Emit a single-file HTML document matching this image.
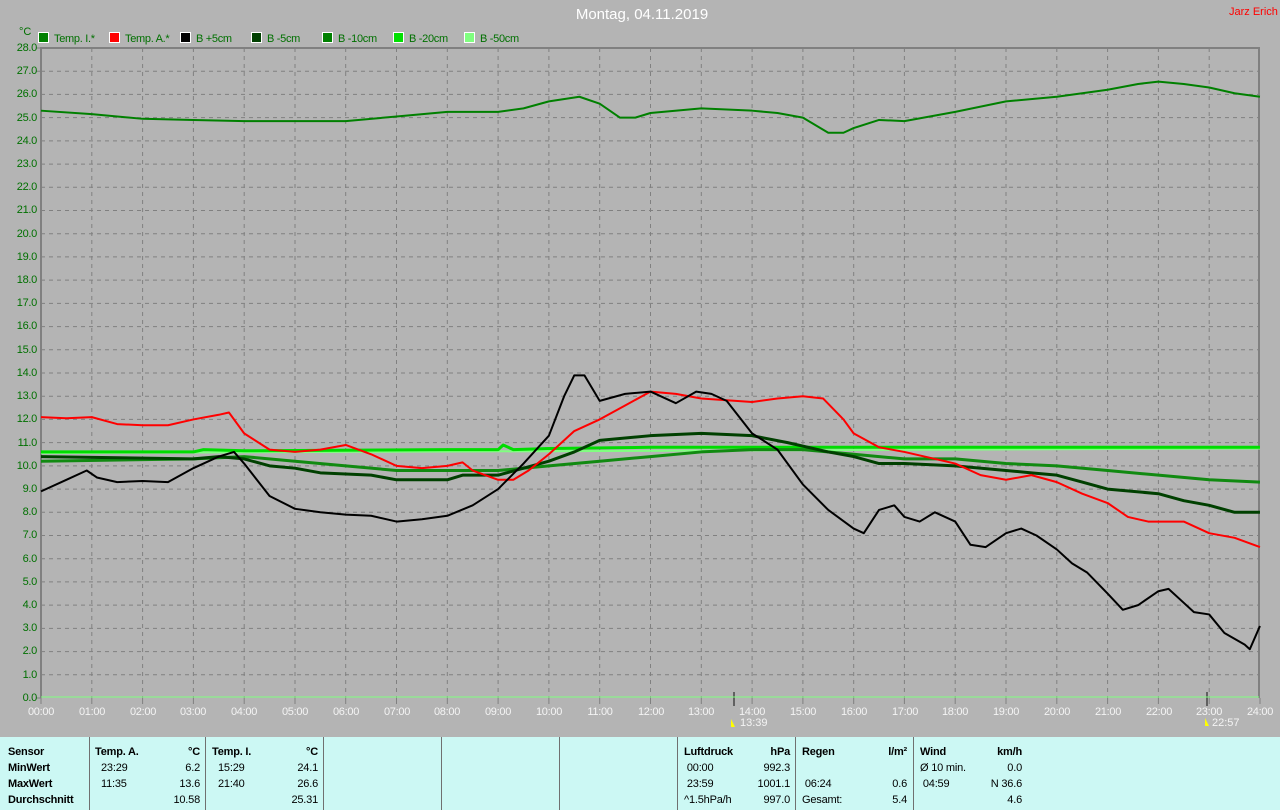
<!DOCTYPE html>
<html><head><meta charset="utf-8"><style>
body{margin:0;width:1280px;height:810px;background:#b4b4b4;position:relative;overflow:hidden;font-family:"Liberation Sans",sans-serif}
.a{position:absolute;white-space:nowrap}
.yl{position:absolute;right:1243px;font-size:11px;color:#007000;line-height:12px;letter-spacing:-0.3px}
.xl{position:absolute;font-size:11px;color:#f4f4f4;width:40px;text-align:center;top:706px;letter-spacing:-0.3px}
.lg{position:absolute;top:32px;font-size:11px;color:#007000;letter-spacing:-0.3px}
.lg i{display:inline-block;width:9px;height:9px;border:1px solid #fff;vertical-align:-1px;margin-right:5px}
#bot{position:absolute;left:0;top:737px;width:1280px;height:73px;background:#ccf8f4}
.sep{position:absolute;top:0;width:1px;height:73px;background:#707070}
.t{position:absolute;font-size:11px;color:#000;line-height:16px;letter-spacing:-0.2px}
.b{font-weight:bold}
</style></head><body>
<div class="a" style="left:0;width:1284px;text-align:center;top:6px;font-size:15px;color:#fff">Montag, 04.11.2019</div>
<div class="a" style="left:1229px;top:6px;font-size:11px;color:#f00">Jarz Erich</div>
<div class="a" style="left:19px;top:26px;font-size:11px;color:#007000">°C</div>
<div class="lg" style="left:38px"><i style="background:#008000"></i>Temp. I.*</div>
<div class="lg" style="left:109px"><i style="background:#f00"></i>Temp. A.*</div>
<div class="lg" style="left:180px"><i style="background:#000"></i>B +5cm</div>
<div class="lg" style="left:251px"><i style="background:#004000"></i>B -5cm</div>
<div class="lg" style="left:322px"><i style="background:#008000"></i>B -10cm</div>
<div class="lg" style="left:393px"><i style="background:#00e000"></i>B -20cm</div>
<div class="lg" style="left:464px"><i style="background:#80ff80"></i>B -50cm</div>

<svg class="a" style="left:0;top:0" width="1280" height="810">
<g stroke="#808080" stroke-width="1" stroke-dasharray="4,4" fill="none">
<path d="M41 71.2H1260M41 94.4H1260M41 117.6H1260M41 140.9H1260M41 164.1H1260M41 187.3H1260M41 210.5H1260M41 233.7H1260M41 256.9H1260M41 280.1H1260M41 303.4H1260M41 326.6H1260M41 349.8H1260M41 373H1260M41 396.2H1260M41 419.4H1260M41 442.6H1260M41 465.9H1260M41 489.1H1260M41 512.3H1260M41 535.5H1260M41 558.7H1260M41 581.9H1260M41 605.1H1260M41 628.4H1260M41 651.6H1260M41 674.8H1260"/>
<path d="M91.8 48V698M142.6 48V698M193.4 48V698M244.2 48V698M295 48V698M345.7 48V698M396.5 48V698M447.3 48V698M498.1 48V698M548.9 48V698M599.7 48V698M650.5 48V698M701.3 48V698M752.1 48V698M802.9 48V698M853.7 48V698M904.4 48V698M955.2 48V698M1006 48V698M1056.8 48V698M1107.6 48V698M1158.4 48V698M1209.2 48V698"/>
</g>
<path d="M41 698V48H1259V698" stroke="#808080" stroke-width="2" fill="none"/>
<path d="M36 48H41M36 71.2H41M36 698H41" stroke="#808080"/>
<g stroke="#808080"><path d="M41 698v6M91.8 698v6M142.6 698v6M193.4 698v6M244.2 698v6M295 698v6M345.7 698v6M396.5 698v6M447.3 698v6M498.1 698v6M548.9 698v6M599.7 698v6M650.5 698v6M701.3 698v6M752.1 698v6M802.9 698v6M853.7 698v6M904.4 698v6M955.2 698v6M1006 698v6M1056.8 698v6M1107.6 698v6M1158.4 698v6M1209.2 698v6M1260 698v6"/></g>
<path d="M734 692v14M1207 692v14" stroke="#606060" stroke-width="2"/>
<path d="M41 697H1259" stroke="#80ff80" stroke-width="1"/>
<g transform="translate(41,698) scale(50.79,-23.214)" fill="none" stroke-linejoin="round">
<polyline vector-effect="non-scaling-stroke" stroke="#80ff80" stroke-width="2" points="0,10.55 24,10.75"/>
<polyline vector-effect="non-scaling-stroke" stroke="#00dd00" stroke-width="3" points="0,10.6 3,10.6 3.2,10.7 4,10.65 8,10.7 9,10.7 9.1,10.9 9.3,10.7 10,10.75 12,10.8 24,10.8"/>
<polyline vector-effect="non-scaling-stroke" stroke="#118a11" stroke-width="3" points="0,10.2 3,10.3 4,10.4 5,10.2 6,10 7,9.8 8,9.8 9,9.8 10,10 11,10.2 12,10.4 13,10.6 14,10.7 15,10.7 16,10.5 17,10.3 18,10.3 19,10.1 20,10 21,9.8 22,9.6 23,9.4 24,9.3"/>
<polyline vector-effect="non-scaling-stroke" stroke="#004000" stroke-width="3" points="0,10.4 3,10.3 3.5,10.4 4,10.3 4.5,10 5,9.9 5.5,9.7 6.5,9.6 7,9.4 8,9.4 8.3,9.6 9,9.6 9.5,9.9 10,10.2 10.5,10.6 11,11.1 12,11.3 13,11.4 14,11.3 14.7,11 15.5,10.6 16,10.4 16.5,10.1 17,10.1 18,10 19,9.8 19.5,9.7 20,9.6 20.5,9.3 21,9 22,8.8 22.5,8.5 23,8.3 23.5,8 24,8"/>
<polyline vector-effect="non-scaling-stroke" stroke="#f00" stroke-width="2" points="0,12.1 0.5,12.05 1,12.1 1.5,11.8 2,11.75 2.5,11.75 3,12 3.5,12.2 3.7,12.3 4,11.4 4.5,10.7 5,10.6 5.5,10.7 6,10.9 6.5,10.5 7,10 7.5,9.9 8,10 8.3,10.15 8.5,9.8 9,9.4 9.3,9.4 9.6,9.8 10,10.5 10.5,11.5 11,12 11.5,12.6 12,13.2 12.5,13.1 13,12.9 14,12.75 14.5,12.9 15,13 15.4,12.9 15.8,12 16,11.4 16.5,10.8 17,10.6 18,10.1 18.5,9.6 19,9.4 19.5,9.6 20,9.3 20.5,8.8 21,8.4 21.4,7.8 21.8,7.6 22.5,7.6 23,7.1 23.5,6.9 24,6.5"/>
<polyline vector-effect="non-scaling-stroke" stroke="#000" stroke-width="2" points="0,8.9 0.5,9.4 0.9,9.8 1.1,9.5 1.5,9.3 2,9.35 2.5,9.3 3,9.9 3.5,10.4 3.8,10.6 4,10.1 4.5,8.7 5,8.15 5.5,8 6,7.9 6.5,7.85 7,7.6 7.5,7.7 8,7.85 8.5,8.3 9,9 9.5,10.1 10,11.3 10.3,13 10.5,13.9 10.7,13.9 11,12.8 11.5,13.1 12,13.2 12.5,12.7 12.9,13.2 13.2,13.1 13.5,12.8 14,11.4 14.5,10.7 15,9.2 15.5,8.1 16,7.3 16.2,7.1 16.5,8.1 16.8,8.3 17,7.8 17.3,7.6 17.6,8 18,7.6 18.3,6.6 18.6,6.5 19,7.1 19.3,7.3 19.6,7 20,6.4 20.3,5.8 20.6,5.4 21,4.5 21.3,3.8 21.6,4 22,4.6 22.2,4.7 22.5,4.1 22.7,3.7 23,3.6 23.3,2.8 23.7,2.3 23.8,2.1 24,3.1"/>
<polyline vector-effect="non-scaling-stroke" stroke="#008000" stroke-width="2" points="0,25.3 1,25.15 2,24.95 3,24.9 4,24.85 5,24.85 6,24.85 7,25.05 8,25.25 9,25.25 9.5,25.4 10,25.7 10.6,25.9 11,25.6 11.4,25 11.7,25 12,25.2 13,25.4 14,25.3 14.5,25.2 15,25 15.5,24.35 15.8,24.35 16,24.55 16.5,24.9 17,24.85 18,25.25 19,25.7 20,25.9 21,26.2 21.6,26.45 22,26.55 22.5,26.45 23,26.3 23.5,26.05 24,25.9"/>
</g>
<path d="M731 719l4 8h-4z M1205 718l4 8h-4z" fill="#ff0"/>
</svg>

<div class="yl" style="top:42px">28.0</div><div class="yl" style="top:65px">27.0</div><div class="yl" style="top:88px">26.0</div><div class="yl" style="top:112px">25.0</div><div class="yl" style="top:135px">24.0</div><div class="yl" style="top:158px">23.0</div><div class="yl" style="top:181px">22.0</div><div class="yl" style="top:204px">21.0</div><div class="yl" style="top:228px">20.0</div><div class="yl" style="top:251px">19.0</div><div class="yl" style="top:274px">18.0</div><div class="yl" style="top:297px">17.0</div><div class="yl" style="top:320px">16.0</div><div class="yl" style="top:344px">15.0</div><div class="yl" style="top:367px">14.0</div><div class="yl" style="top:390px">13.0</div><div class="yl" style="top:413px">12.0</div><div class="yl" style="top:437px">11.0</div><div class="yl" style="top:460px">10.0</div><div class="yl" style="top:483px">9.0</div><div class="yl" style="top:506px">8.0</div><div class="yl" style="top:529px">7.0</div><div class="yl" style="top:553px">6.0</div><div class="yl" style="top:576px">5.0</div><div class="yl" style="top:599px">4.0</div><div class="yl" style="top:622px">3.0</div><div class="yl" style="top:645px">2.0</div><div class="yl" style="top:669px">1.0</div><div class="yl" style="top:692px">0.0</div>

<div class="xl" style="left:21px">00:00</div><div class="xl" style="left:72px">01:00</div><div class="xl" style="left:123px">02:00</div><div class="xl" style="left:173px">03:00</div><div class="xl" style="left:224px">04:00</div><div class="xl" style="left:275px">05:00</div><div class="xl" style="left:326px">06:00</div><div class="xl" style="left:377px">07:00</div><div class="xl" style="left:427px">08:00</div><div class="xl" style="left:478px">09:00</div><div class="xl" style="left:529px">10:00</div><div class="xl" style="left:580px">11:00</div><div class="xl" style="left:631px">12:00</div><div class="xl" style="left:681px">13:00</div><div class="xl" style="left:732px">14:00</div><div class="xl" style="left:783px">15:00</div><div class="xl" style="left:834px">16:00</div><div class="xl" style="left:885px">17:00</div><div class="xl" style="left:935px">18:00</div><div class="xl" style="left:986px">19:00</div><div class="xl" style="left:1037px">20:00</div><div class="xl" style="left:1088px">21:00</div><div class="xl" style="left:1139px">22:00</div><div class="xl" style="left:1189px">23:00</div><div class="xl" style="left:1240px">24:00</div>
<div class="a" style="left:740px;top:717px;font-size:11px;color:#f4f4f4">13:39</div>
<div class="a" style="left:1212px;top:717px;font-size:11px;color:#f4f4f4">22:57</div>

<div id="bot">
<div class="sep" style="left:89px"></div><div class="sep" style="left:205px"></div><div class="sep" style="left:323px"></div><div class="sep" style="left:441px"></div><div class="sep" style="left:559px"></div><div class="sep" style="left:677px"></div><div class="sep" style="left:795px"></div><div class="sep" style="left:913px"></div>
<div class="t b" style="left:8px;top:7px">Sensor<br>MinWert<br>MaxWert<br>Durchschnitt</div>
<div class="t b" style="left:95px;top:7px">Temp. A.</div>
<div class="t" style="left:101px;top:23px">23:29<br>11:35</div>
<div class="t" style="left:150px;top:7px;width:50px;text-align:right"><b>°C</b><br>6.2<br>13.6<br>10.58</div>
<div class="t b" style="left:212px;top:7px">Temp. I.</div>
<div class="t" style="left:218px;top:23px">15:29<br>21:40</div>
<div class="t" style="left:268px;top:7px;width:50px;text-align:right"><b>°C</b><br>24.1<br>26.6<br>25.31</div>
<div class="t b" style="left:684px;top:7px">Luftdruck</div>
<div class="t" style="left:684px;top:23px">&nbsp;00:00<br>&nbsp;23:59<br>^1.5hPa/h</div>
<div class="t" style="left:740px;top:7px;width:50px;text-align:right"><b>hPa</b><br>992.3<br>1001.1<br>997.0</div>
<div class="t b" style="left:802px;top:7px">Regen</div>
<div class="t" style="left:802px;top:39px">&nbsp;06:24<br>Gesamt:</div>
<div class="t" style="left:857px;top:7px;width:50px;text-align:right"><b>l/m²</b><br>&nbsp;<br>0.6<br>5.4</div>
<div class="t b" style="left:920px;top:7px">Wind</div>
<div class="t" style="left:920px;top:23px">Ø 10 min.<br>&nbsp;04:59</div>
<div class="t" style="left:962px;top:7px;width:60px;text-align:right"><b>km/h</b><br>0.0<br>N 36.6<br>4.6</div>
</div>
</body></html>
